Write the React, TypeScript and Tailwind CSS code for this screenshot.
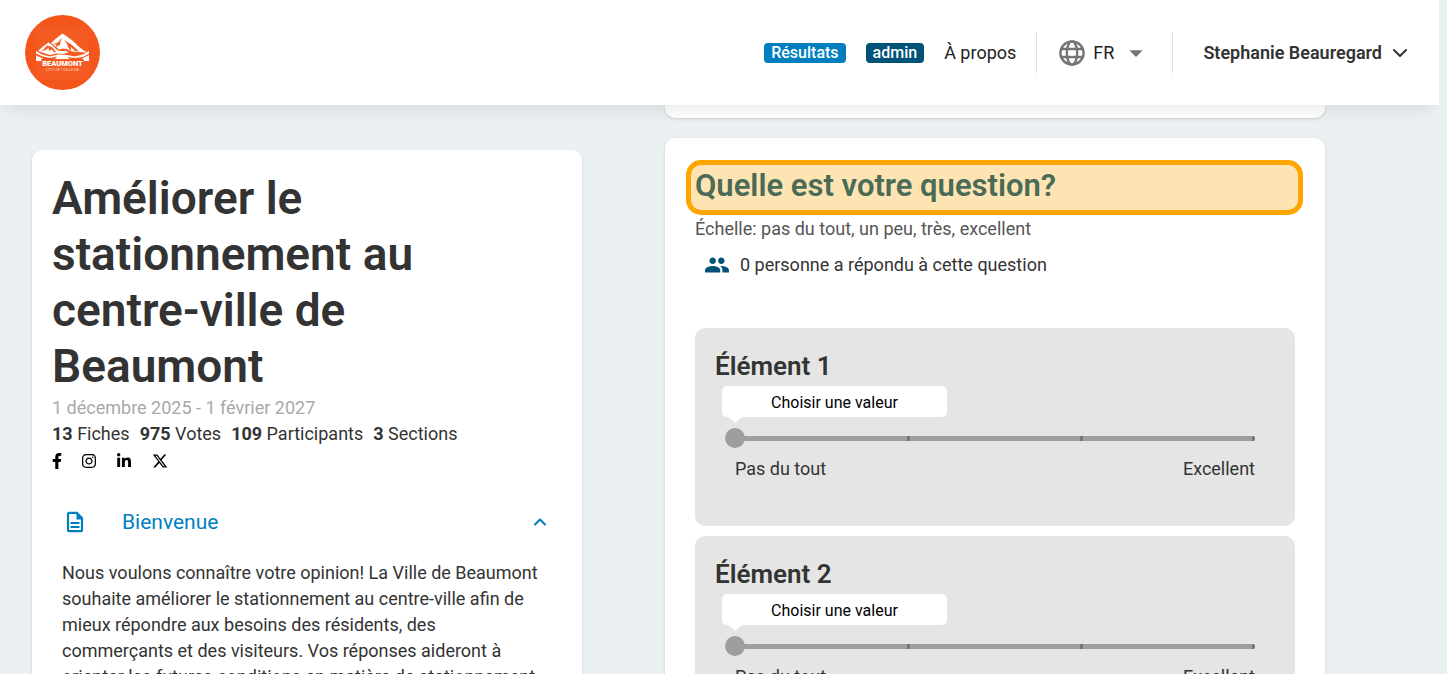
import { FormEvent, ReactNode, useState } from "react"
import { ChevronDown, ChevronUp } from "lucide-react"
import { FaFacebookF, FaInstagram, FaLinkedinIn } from "react-icons/fa"
import { FaXTwitter } from "react-icons/fa6"
import { MdArrowDropDown, MdPeople } from "react-icons/md"

const stats = [
  { value: "13", label: "Fiches" },
  { value: "975", label: "Votes" },
  { value: "109", label: "Participants" },
  { value: "3", label: "Sections" },
]

const socials = [
  { name: "Facebook", icon: <FaFacebookF className="h-4 w-2.5" /> },
  { name: "Instagram", icon: <FaInstagram className="h-4 w-3.5" /> },
  { name: "LinkedIn", icon: <FaLinkedinIn className="h-4 w-4" /> },
  { name: "X", icon: <FaXTwitter className="h-4 w-4" /> },
]

const choices = ["Pas du tout", "Un peu", "Très", "Excellent"]

const items = ["Élément 1", "Élément 2"]

const Logo = () => (
  <svg viewBox="0 0 75 75" className="size-[75px]" role="img" aria-label="Beaumont">
    <circle cx="37.5" cy="37.5" r="37.5" fill="#f4551b" />
    <rect x="11" y="11" width="53" height="53" fill="#f35b22" />
    <g fill="#fff">
      <path d="M13 36 L18 31.5 L23.5 27.5 L27 30 L31 34 L34 36 L40 36 L44 37 L39 39 L31 38.5 L25 40 L19 38 Z" />
      <path d="M26 28 L31 23.5 L37.5 18.5 L42 21.5 L48 26 L53 31 L58 35 L62.5 37.5 L54 37 L47 36.5 L42 34 L38 33.5 L34 34.5 L30 31 Z" />
      <path d="M11 36 L17 39.5 L25 41.5 L33 39.5 L42 40 L50 41.5 L58 39.5 L64 36 V46 H59 L58 44 H17 L16 46 H11 Z" />
    </g>
    <g fill="#f35b22">
      <path d="M37 22.5 L33.5 27 L28 29.5 L31.5 29.5 L31 32 L35 30 L35.5 26.5 Z" />
      <path d="M39 25 L42 29 L44 34 L46.5 35.5 L45.5 31.5 L50 36 L54 36.5 L47 30 Z" />
      <path d="M22 30.5 L19 34 L16 36 L21 35 L23.5 32.5 L24 36 L27 34.5 L29 37.5 L31 37 L27 32 Z" />
      <path d="M11 38.5 L18 41.5 L25 43 L32 41.5 L30 44 H45 L42 42 L50 43 L58 42 L64 38.5 V40 L57 43.5 L60 44.5 H15 L18 43.5 L11 40.5 Z" />
    </g>
    <text x="37.5" y="51" textAnchor="middle" fontSize="7.5" fontWeight="900" fill="#fff">BEAUMONT</text>
    <text x="37.5" y="55.5" textAnchor="middle" fontSize="4" fill="#fff" opacity="0.7">CITY OF | VILLE DE</text>
  </svg>
)

const GlobeIcon = () => (
  <svg viewBox="0 0 26 26" className="mr-2 ml-0.5 size-[26px] text-[#757575]" fill="none" stroke="currentColor" strokeWidth="2.4" aria-hidden="true">
    <circle cx="13" cy="13" r="11.6" />
    <ellipse cx="13" cy="13" rx="5.2" ry="11.6" />
    <path d="M2.5 9 H23.5 M2.5 17 H23.5" />
  </svg>
)

const DocumentIcon = () => (
  <svg viewBox="0 0 18 22" className="mr-[38px] ml-1 h-[22px] w-[18px]" fill="none" stroke="currentColor" strokeWidth="2.2" aria-hidden="true">
    <path d="M11.5 1.9 H3 a1 1 0 0 0 -1 1 V19.2 a1 1 0 0 0 1 1 H15 a1 1 0 0 0 1 -1 V7" />
    <path d="M10.5 1 H11.5 L17 6.5 V8.5 H10.5 Z" fill="currentColor" stroke="none" />
    <path d="M4.5 12 H13.5 M4.5 16 H13.5" strokeWidth="1.8" />
  </svg>
)

const Header = () => (
  <header className="relative z-10 flex h-[105px] items-center justify-between bg-white pr-[27px] pl-[25px] shadow-[0_8px_18px_-6px_rgba(0,0,0,0.11)]">
    <a href="#">
      <Logo />
    </a>
    <nav className="flex items-center text-lg text-[#222]">
      <a href="#" className="mr-5 rounded bg-[#007fbf] px-[7px] text-base leading-5 font-medium text-white">
        Résultats
      </a>
      <a href="#" className="mr-5 rounded bg-[#005279] px-[7px] text-base leading-5 font-medium text-white">
        admin
      </a>
      <a href="#">À propos</a>
      <button className="ml-5 flex h-10 items-center border-x border-[#ddd] pr-5 pl-5">
        <GlobeIcon />
        FR
        <MdArrowDropDown className="ml-1.5 size-8 text-[#757575]" />
      </button>
      <button className="ml-[30px] flex items-center font-semibold text-[#333]">
        Stephanie Beauregard
        <ChevronDown className="ml-1.5 size-6" />
      </button>
    </nav>
  </header>
)

const Card = ({ children, className }: { children?: ReactNode; className: string }) => (
  <section className={"bg-white shadow-[0_1px_3px_rgba(0,0,0,0.15)] " + className}>{children}</section>
)

const Project = () => {
  const [open, setOpen] = useState(true)

  return (
    <Card className="mt-[45px] rounded-[10px] px-5 pt-5 pb-5">
      <h1 className="pb-px text-[46px] leading-[56px] font-semibold">
        Améliorer le stationnement au centre-ville de Beaumont
      </h1>
      <p className="text-lg leading-[26px] text-[#a8a8a8]">1 décembre 2025 - 1 février 2027</p>
      <ul className="flex gap-2.5 text-lg leading-[26px]">
        {stats.map((stat) => (
          <li key={stat.label}>
            <b>{stat.value}</b> {stat.label}
          </li>
        ))}
      </ul>
      <div className="flex h-7 items-center gap-5 text-black">
        {socials.map((social) => (
          <a key={social.name} href="#" aria-label={social.name}>
            {social.icon}
          </a>
        ))}
      </div>
      <button
        className="mt-8 flex w-full items-center px-2.5 text-[21px] leading-[30px] text-[#007fbf]"
        aria-expanded={open}
        onClick={() => setOpen(!open)}
      >
        <DocumentIcon />
        Bienvenue
        <ChevronUp className="mr-0.5 ml-auto size-5" strokeWidth={2.5} />
      </button>
      {open && (
        <p className="pt-[23px] pr-4 pl-2.5 text-lg leading-[26px]">
          Nous voulons connaître votre opinion! La Ville de Beaumont souhaite améliorer le
          stationnement au centre-ville afin de mieux répondre aux besoins des résidents, des
          commerçants et des visiteurs. Vos réponses aideront à orienter les futures conditions en
          matière de stationnement.
        </p>
      )}
    </Card>
  )
}

const ScaleItem = ({ id, title }: { id: string; title: string }) => {
  const [value, setValue] = useState<string | null>(null)
  const onInput = (e: FormEvent<HTMLInputElement>) => setValue(e.currentTarget.value)

  return (
    <div className="rounded-[10px] bg-[#e5e5e5] px-5 pt-5 pb-11">
      <label htmlFor={id} className="block text-[26px] leading-9 font-semibold">
        {title}
      </label>
      <output
        htmlFor={id}
        className="relative mt-0.5 ml-[7px] block w-[225px] rounded-[5px] bg-white pt-[3px] text-center text-base leading-7 text-black"
      >
        {value === null ? "Choisir une valeur" : choices[Number(value)]}
        <span className="absolute top-full left-1.5 border-x-7 border-t-6 border-transparent border-t-white" />
      </output>
      <div className="mx-2.5 mt-[11px] grid items-center">
        <div className="mx-2.5 flex h-[5px] justify-between overflow-hidden rounded-r-full bg-[#9e9e9e] [grid-area:1/1]">
          {choices.map((choice) => (
            <span key={choice} className="w-[3px] bg-[#757575]" />
          ))}
        </div>
        <input
          id={id}
          type="range"
          min="0"
          max="3"
          value={value ?? "0"}
          onInput={onInput}
          className="z-0 h-5 w-full appearance-none bg-transparent [grid-area:1/1] [&::-webkit-slider-thumb]:size-5 [&::-webkit-slider-thumb]:appearance-none [&::-webkit-slider-thumb]:rounded-full [&::-webkit-slider-thumb]:bg-[#9e9e9e]"
        />
      </div>
      <div className="mx-5 mt-2 flex justify-between text-lg leading-[26px]">
        <span>{choices[0]}</span>
        <span>{choices[choices.length - 1]}</span>
      </div>
    </div>
  )
}

const Question = () => (
  <Card className="rounded-[10px] px-[30px] pt-[22px] pb-[30px]">
    <h2 className="-mr-2 -ml-[9px] rounded-[15px] border-5 border-[#ffa500] bg-[#ffe4b3] pb-[3px] pl-1 text-[31px] leading-[42px] font-semibold text-[#4a6b57]">
      Quelle est votre question?
    </h2>
    <p className="text-lg leading-7 text-[#555]">Échelle: pas du tout, un peu, très, excellent</p>
    <p className="mt-2 mb-[49px] flex items-center gap-2.5 pl-[9px] text-lg leading-7">
      <MdPeople className="size-[26px] text-[#005279]" />0 personne a répondu à cette question
    </p>
    <div className="flex flex-col gap-2.5">
      {items.map((title, i) => (
        <ScaleItem key={title} id={"item-" + i} title={title} />
      ))}
    </div>
  </Card>
)

export default function App() {
  return (
    <div className="h-screen bg-[#ebf0f3] pr-2 font-['Roboto',sans-serif] text-[#333]">
      <div className="h-full overflow-hidden">
        <Header />
        <main className="grid grid-cols-[5fr_6fr] items-start gap-x-[83px] pr-[114px] pl-8">
          <Project />
          <div className="flex flex-col gap-5">
            <Card className="h-[13px] rounded-b-[10px]" />
            <Question />
          </div>
        </main>
      </div>
    </div>
  )
}
